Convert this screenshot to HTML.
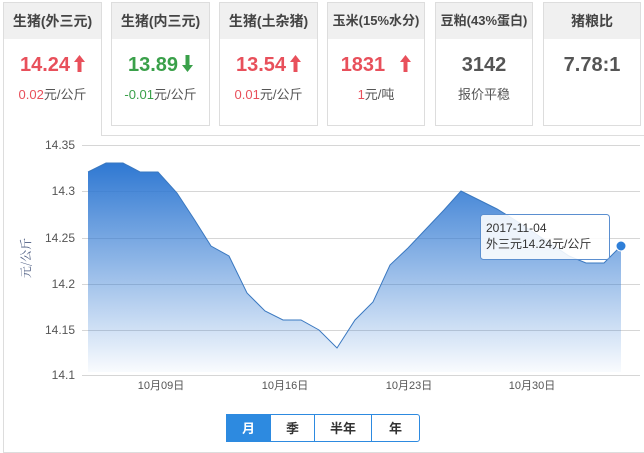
<!DOCTYPE html>
<html><head><meta charset="utf-8"><style>
body{margin:0;width:644px;height:453px;background:#fff;font-family:"Liberation Sans","Noto Sans CJK SC",sans-serif;position:relative;overflow:hidden}
.card{position:absolute;top:2px;height:124px;border:1px solid #ddd;box-sizing:border-box;background:#fff;text-align:center}
.card .h{height:36px;line-height:36px;background:#f0f0f0;font-size:14px;color:#444;font-weight:bold}
.card .v{margin-top:13px;font-size:20px;font-weight:bold;height:26px;line-height:26px}
.card .v svg{vertical-align:-1px;margin-left:4px}
.card .s{margin-top:6px;font-size:13px;color:#555}
.r{color:#e8505b}.g{color:#3aa04a}.k{color:#555}
.panel{position:absolute;left:3px;top:135px;width:650px;height:318px;border:1px solid #ddd;box-sizing:border-box}
.btn{position:absolute;top:414px;height:28px;line-height:28px;text-align:center;font-size:13px;font-weight:bold;color:#333;border:1px solid #2d8ae0;box-sizing:border-box;background:#fff}
</style></head><body>
<div class="panel"></div>
<div class="card" style="left:3px;width:99px;height:134px;border-bottom:none"><div class="h">生猪(外三元)</div><div class="v r">14.24<svg width="11" height="17" viewBox="0 0 11 17"><path d="M5.5,0 L11,7 L7.5,7 L7.5,17 L3.5,17 L3.5,7 L0,7 Z" fill="#e8505b"/></svg></div><div class="s"><span class="r">0.02</span>元/公斤</div></div>
<div class="card" style="left:111px;width:99px"><div class="h">生猪(内三元)</div><div class="v g">13.89<svg width="11" height="17" viewBox="0 0 11 17"><path d="M5.5,17 L11,10 L7.5,10 L7.5,0 L3.5,0 L3.5,10 L0,10 Z" fill="#3aa04a"/></svg></div><div class="s"><span class="g">-0.01</span>元/公斤</div></div>
<div class="card" style="left:219px;width:99px"><div class="h">生猪(土杂猪)</div><div class="v r">13.54<svg width="11" height="17" viewBox="0 0 11 17"><path d="M5.5,0 L11,7 L7.5,7 L7.5,17 L3.5,17 L3.5,7 L0,7 Z" fill="#e8505b"/></svg></div><div class="s"><span class="r">0.01</span>元/公斤</div></div>
<div class="card" style="left:327px;width:98px"><div class="h" style="font-size:13px">玉米(15%水分)</div><div class="v r">1831 &nbsp;<svg width="11" height="17" viewBox="0 0 11 17"><path d="M5.5,0 L11,7 L7.5,7 L7.5,17 L3.5,17 L3.5,7 L0,7 Z" fill="#e8505b"/></svg></div><div class="s"><span class="r">1</span>元/吨</div></div>
<div class="card" style="left:435px;width:98px"><div class="h" style="font-size:13px">豆粕(43%蛋白)</div><div class="v k">3142</div><div class="s">报价平稳</div></div>
<div class="card" style="left:543px;width:98px"><div class="h">猪粮比</div><div class="v k">7.78:1</div></div>
<svg style="position:absolute;left:0;top:0" width="644" height="453">
<defs><linearGradient id="gr" x1="0" y1="0" x2="0" y2="1"><stop offset="0" stop-color="#2f78d2"/><stop offset="1" stop-color="#2f78d2" stop-opacity="0.03"/></linearGradient></defs>
<g stroke="#d6d6d6" stroke-width="1">
<line x1="82" y1="145.5" x2="640" y2="145.5"/><line x1="82" y1="191.5" x2="640" y2="191.5"/><line x1="82" y1="238.5" x2="640" y2="238.5"/><line x1="82" y1="284.5" x2="640" y2="284.5"/><line x1="82" y1="330.5" x2="640" y2="330.5"/><line x1="82" y1="375.5" x2="640" y2="375.5"/></g>
<path d="M88,172 L106,163 L123,163 L140,172 L158,172 L177,193 L194,219 L211,246 L229,256 L247,293 L265,311 L283,320 L301,320 L319,330 L337,348 L355,320 L373,302 L390,265 L408,248 L426,229 L444,210 L461,191 L479,200 L497,209 L515,220 L533,232 L551,244 L569,256 L586,263 L604,263 L621,246 L621,372 L88,372 Z" fill="url(#gr)"/>
<path d="M88,172 L106,163 L123,163 L140,172 L158,172 L177,193 L194,219 L211,246 L229,256 L247,293 L265,311 L283,320 L301,320 L319,330 L337,348 L355,320 L373,302 L390,265 L408,248 L426,229 L444,210 L461,191 L479,200 L497,209 L515,220 L533,232 L551,244 L569,256 L586,263 L604,263 L621,246" fill="none" stroke="#3a78c0" stroke-width="1"/>
<circle cx="621" cy="246" r="5" fill="#2f7fd8" stroke="#fff" stroke-width="1"/>
<g font-size="12" fill="#555" text-anchor="end" font-family="Liberation Sans,sans-serif">
<text x="75" y="149">14.35</text><text x="75" y="195">14.3</text><text x="75" y="242">14.25</text><text x="75" y="288">14.2</text><text x="75" y="334">14.15</text><text x="75" y="379">14.1</text></g>
<g font-size="11" fill="#555" text-anchor="middle" font-family="Liberation Sans,Noto Sans CJK SC,sans-serif">
<text x="161" y="389">10月09日</text><text x="285" y="389">10月16日</text><text x="409" y="389">10月23日</text><text x="532" y="389">10月30日</text></g>
<text transform="translate(30,258) rotate(-90)" font-size="12" fill="#4a5a80" text-anchor="middle" font-family="Noto Serif CJK SC,serif">元/公斤</text>
<rect x="480.5" y="214.5" width="129" height="45" rx="3" fill="#fff" fill-opacity="0.88" stroke="#5b8fd0"/>
<text x="486" y="232" font-size="12" fill="#333" font-family="Liberation Sans,sans-serif">2017-11-04</text>
<text x="486" y="248" font-size="12" fill="#333" font-family="Liberation Sans,Noto Sans CJK SC,sans-serif">外三元14.24元/公斤</text>
</svg>
<div class="btn" style="left:226px;width:45px;background:#2d8ae0;color:#fff">月</div>
<div class="btn" style="left:270px;width:45px">季</div>
<div class="btn" style="left:314px;width:58px">半年</div>
<div class="btn" style="left:371px;width:49px;border-radius:0 3px 3px 0">年</div>
</body></html>
